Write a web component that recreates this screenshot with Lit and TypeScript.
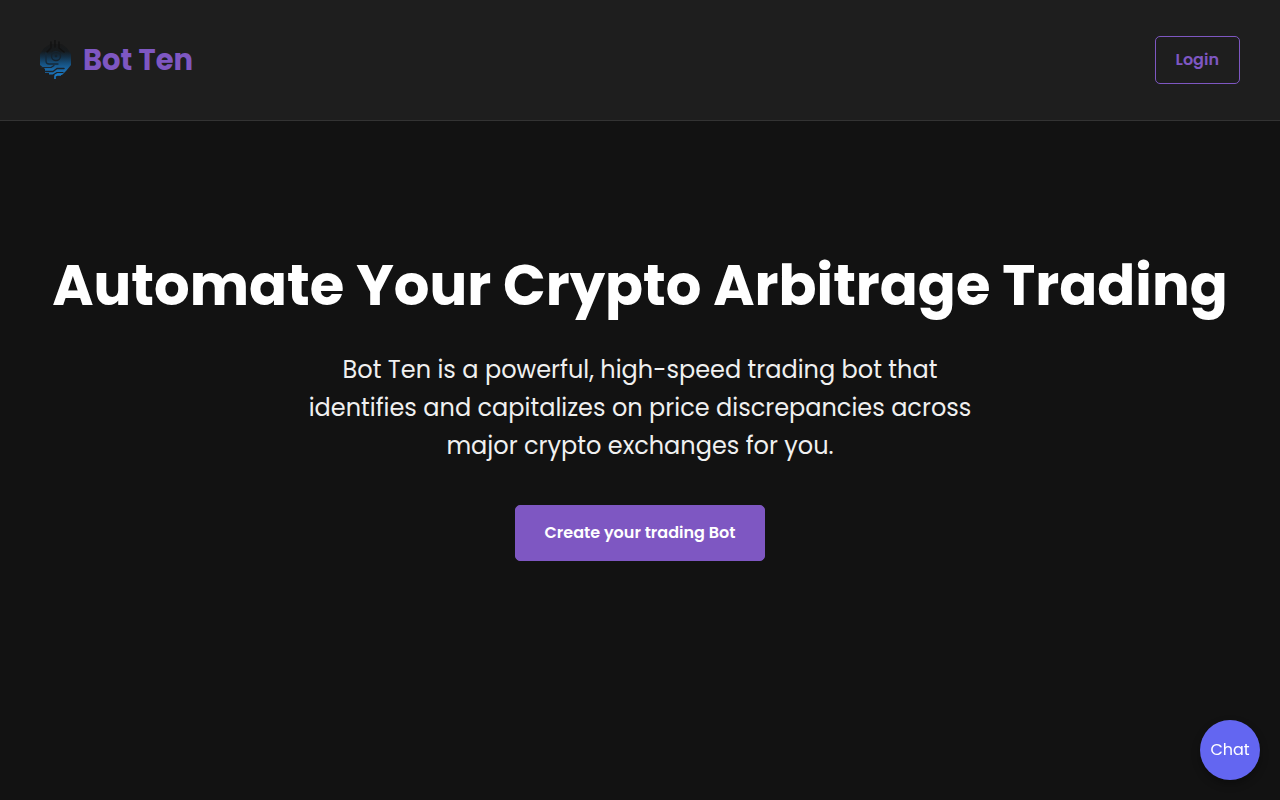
import { LitElement, html, css } from "lit";
import { customElement } from "lit/decorators.js";

@customElement("bot-logo")
class BotLogo extends LitElement {
  static styles = css`
    :host {
      display: block;
    }
    .mark {
      display: block;
      width: 32px;
      height: 40px;
    }
  `;

  render() {
    return html`
      <svg class="mark" viewBox="0 0 32 40" fill="none" aria-hidden="true">
        <defs>
          <linearGradient id="body" x1="0" y1="0" x2="0" y2="40" gradientUnits="userSpaceOnUse">
            <stop offset="0.1" stop-color="#191919" />
            <stop offset="0.28" stop-color="#161a1d" />
            <stop offset="0.42" stop-color="#142f45" />
            <stop offset="0.58" stop-color="#164f7c" />
            <stop offset="0.75" stop-color="#1a69a8" />
            <stop offset="1" stop-color="#1c7ac2" />
          </linearGradient>
        </defs>
        <path
          fill="url(#body)"
          d="M10 4 L22 4 L27 8 L31 14 L31 25 L26 31 L22 35 H9 V33 H5 V29 L0 25 L0 14 L4 8 Z"
        />
        <g stroke-linecap="round" stroke-linejoin="round">
          <path d="M11 2 V8 L7 12 M15 0 V7 M19 2 V8 L24 12" stroke="#121212" stroke-width="1.4" />
          <path d="M6 13 V21 Q6 24 9 24 H18" stroke="#15293a" stroke-width="1.3" />
          <path d="M1 27.5 H11 L14 25.5" stroke="#1c2630" stroke-width="1.2" />
          <path d="M5 31.5 H13 L17 28.5 H24" stroke="#1c2228" stroke-width="1.5" />
          <path d="M9 35 H13 L17 32.5 H23" stroke="#1e1e1e" stroke-width="1.2" />
        </g>
        <circle cx="16" cy="16" r="4.5" stroke="#15222d" stroke-width="1.3" />
        <circle cx="16" cy="16" r="1.3" fill="#15222d" />
        <path d="M15 39 V36 L17 35 H21" stroke="#1c7ac2" stroke-width="1.6" />
      </svg>
    `;
  }
}

@customElement("app-root")
class AppRoot extends LitElement {
  static styles = css`
    :host {
      display: flex;
      flex-direction: column;
      min-height: 100vh;
      background: #121212;
      color: #fff;
      font-family: Poppins, Inter, "Open Sans", sans-serif;
      font-size: 16px;
      line-height: 24px;
    }
    * {
      box-sizing: border-box;
    }
    .header {
      display: flex;
      align-items: center;
      justify-content: space-between;
      padding: 36px 40px;
      background: #1e1e1e;
      border-bottom: 1px solid #333;
    }
    .brand {
      display: flex;
      align-items: center;
      gap: 11px;
      color: #7e57c2;
      font-size: 29px;
      line-height: 40px;
      font-weight: 700;
      text-decoration: none;
    }
    .button {
      border: 1px solid #7e57c2;
      border-radius: 5px;
      font: inherit;
      font-weight: 600;
      cursor: pointer;
    }
    .login {
      padding: 11px 20px;
      background: transparent;
      color: #7e57c2;
    }
    .hero {
      display: flex;
      flex-direction: column;
      align-items: center;
      padding: 128px 40px;
      text-align: center;
    }
    .title {
      margin: 0 0 28px;
      font-size: 56px;
      line-height: 74px;
      font-weight: 700;
    }
    .lead {
      max-width: 700px;
      margin: 0 0 40px;
      color: #f0f0f0;
      font-size: 24px;
      line-height: 38px;
    }
    .cta {
      padding: 15px 29px;
      background: #7e57c2;
      color: #fff;
    }
    .chat {
      position: fixed;
      right: 20px;
      bottom: 20px;
      width: 60px;
      height: 60px;
      padding: 0;
      border: none;
      border-radius: 50%;
      background: #6366f1;
      color: #fff;
      font: inherit;
      box-shadow: 0 4px 8px rgba(0, 0, 0, 0.3);
      cursor: pointer;
    }
  `;

  render() {
    return html`
      <header class="header">
        <a class="brand" href="#"><bot-logo></bot-logo>Bot Ten</a>
        <button class="button login" type="button">Login</button>
      </header>
      <main class="hero">
        <h1 class="title">Automate Your Crypto Arbitrage Trading</h1>
        <p class="lead">
          Bot Ten is a powerful, high-speed trading bot that identifies and
          capitalizes on price discrepancies across major crypto exchanges for you.
        </p>
        <button class="button cta" type="button">Create your trading Bot</button>
      </main>
      <button class="chat" type="button">Chat</button>
    `;
  }
}
